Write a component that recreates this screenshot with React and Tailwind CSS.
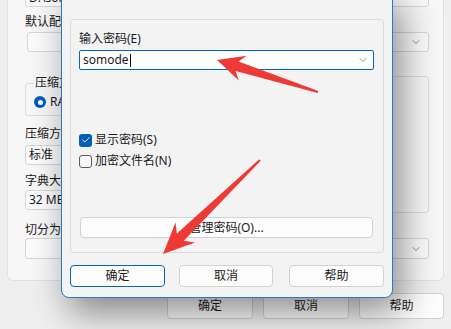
import React from 'react';
import { ChevronDown, Check } from 'lucide-react';

const font = { fontFamily: '"Noto Sans", "Noto Sans CJK SC", sans-serif' };

const arrowPoints = (tip, tail, headLen, headHalf, neckHalf, tailHalf) => {
  const dx = tail[0] - tip[0];
  const dy = tail[1] - tip[1];
  const len = Math.hypot(dx, dy);
  const ux = dx / len;
  const uy = dy / len;
  const nx = -uy;
  const ny = ux;
  const at = (d, w) => [tip[0] + ux * d + nx * w, tip[1] + uy * d + ny * w];
  const pts = [
    tip,
    at(headLen, headHalf),
    at(headLen * 0.78, neckHalf),
    [tail[0] + nx * tailHalf, tail[1] + ny * tailHalf],
    [tail[0] - nx * tailHalf, tail[1] - ny * tailHalf],
    at(headLen * 0.78, -neckHalf),
    at(headLen, -headHalf),
  ];
  return pts.map((p) => p.map((v) => v.toFixed(1)).join(',')).join(' ');
};

const Combo = ({ text, className = '' }) => (
  <div
    className={`h-[20px] flex items-center justify-between pl-[3px] pr-[6px] rounded-[3px] border border-[#d6d6d6] bg-[#fbfbfb] text-[12px] text-[#1b1b1b] ${className}`}
  >
    <span>{text}</span>
    <ChevronDown size={12} strokeWidth={1.3} className="text-[#606060]" />
  </div>
);

const WinButton = ({ children, primary = false, className = '' }) => (
  <button
    type="button"
    className={`flex items-center justify-center rounded-[4px] text-[12px] text-[#1b1b1b] ${
      primary ? 'border border-[#0067c0] bg-[#fdfdfd]' : 'border border-[#d2d2d2] bg-[#fdfdfd]'
    } ${className}`}
  >
    {children}
  </button>
);

const CheckRow = ({ checked, label }) => (
  <div className="flex items-center h-[18px] gap-[3px]">
    {checked ? (
      <span className="w-[13px] h-[13px] rounded-[3px] bg-[#005fb8] flex items-center justify-center">
        <Check size={10} strokeWidth={2.2} className="text-white" />
      </span>
    ) : (
      <span className="w-[13px] h-[13px] rounded-[3px] border border-[#5c5c5c] bg-[#f7f7f7]" />
    )}
    <span className="text-[12px] text-[#1b1b1b] leading-[16px]">{label}</span>
  </div>
);

const App = () => {
  return (
    <div
      className="relative w-[451px] h-[329px] overflow-hidden bg-[#efefef]"
      style={font}
    >
      {/* background window */}
      <div className="mt-[-20px] ml-[7px] w-[437px] h-[301px] border border-[#e1e1e1] rounded-b-[6px] bg-[#f7f7f7] pl-[17px] pr-[14px]">
        <div className="mt-[5px] h-[21px] border border-[#d6d6d6] rounded-[3px] bg-[#fbfbfb] px-[3px] text-[12px] leading-[22px] text-[#1b1b1b]">
          D:\somode\新建文件夹.rar
        </div>
        <div className="mt-[7px] h-[16px] text-[12px] leading-[16px] text-[#1b1b1b]">默认配置文件(F)</div>
        <Combo text="" className="mt-[2px] ml-[2px] h-[19px]" />

        <div className="mt-[24px] flex gap-[10px]">
          <div className="w-[190px]">
            <fieldset className="h-[40px] border border-[#dcdcdc] rounded-[3px] px-[8px]">
              <legend className="px-[1px] text-[12px] leading-[14px] text-[#1b1b1b]">压缩文件格式</legend>
              <div className="mt-[3px] flex items-center gap-[4px] text-[12px] text-[#1b1b1b]">
                <span className="w-[12px] h-[12px] rounded-full bg-[#005fb8] flex items-center justify-center">
                  <span className="w-[5px] h-[5px] rounded-full bg-white" />
                </span>
                <span>RAR</span>
              </div>
            </fieldset>
            <div className="mt-[10px] h-[16px] text-[12px] leading-[16px] text-[#1b1b1b]">压缩方式(C)</div>
            <Combo text="标准" className="mt-[3px]" />
            <div className="mt-[8px] h-[16px] text-[12px] leading-[16px] text-[#1b1b1b]">字典大小(D)</div>
            <Combo text="32 MB" className="mt-[1px]" />
          </div>
          <div className="flex-1 h-[137px] border border-[#dcdcdc] rounded-[3px]" />
        </div>

        <div className="mt-[9px] h-[16px] text-[12px] leading-[16px] text-[#1b1b1b]">切分为分卷，大小(V)</div>
        <Combo text="" className="h-[21px]" />
      </div>

      <div className="mt-[12px] flex justify-end gap-[10px] pr-[7px]">
        <WinButton className="w-[86px] h-[26px]">确定</WinButton>
        <WinButton className="w-[86px] h-[26px]">取消</WinButton>
        <WinButton className="w-[85px] h-[26px]">帮助</WinButton>
      </div>

      {/* password dialog on top */}
      <div className="absolute left-[61px] top-[-10px] w-[332px] h-[308px] border border-[#2b78c8] rounded-b-[8px] bg-[#f3f3f3] shadow-[8px_14px_36px_rgba(0,0,0,0.45)] pt-[28px] pl-[8px]">
        <div className="w-[314px] h-[234px] border border-[#dcdcdc] rounded-[3px] pt-[11px] pl-[8px]">
          <div className="h-[16px] text-[12px] leading-[16px] text-[#1b1b1b]">输入密码(E)</div>
          <div className="mt-[3px] w-[295px] h-[20px] border border-[#0067c0] rounded-[2px] bg-white flex items-center justify-between pl-[3px] pr-[4px]">
            <span className="flex items-center text-[12px] leading-[16px] text-[#1b1b1b]">
              somode
              <span className="ml-[1px] w-[1px] h-[13px] bg-black" />
            </span>
            <ChevronDown size={12} strokeWidth={1.3} className="text-[#606060]" />
          </div>
          <div className="mt-[61px]">
            <CheckRow checked label="显示密码(S)" />
          </div>
          <div className="mt-[3px]">
            <CheckRow label="加密文件名(N)" />
          </div>
          <WinButton className="mt-[47px] ml-[1px] w-[293px] h-[21px]">管理密码(O)...</WinButton>
        </div>
        <div className="mt-[12px] flex">
          <WinButton primary className="w-[95px] h-[22px]">确定</WinButton>
          <WinButton className="ml-[14px] w-[94px] h-[22px]">取消</WinButton>
          <WinButton className="ml-[16px] w-[95px] h-[22px]">帮助</WinButton>
        </div>
      </div>

      {/* annotation arrows */}
      <svg className="absolute inset-0 pointer-events-none" width="451" height="329">
        <polygon points={arrowPoints([217, 60], [318, 92], 27, 13, 5, 1)} fill="#ee3a35" />
        <polygon points={arrowPoints([163, 254], [260, 160], 31, 14, 5, 1)} fill="#ee3a35" />
      </svg>
    </div>
  );
};

export default App;
